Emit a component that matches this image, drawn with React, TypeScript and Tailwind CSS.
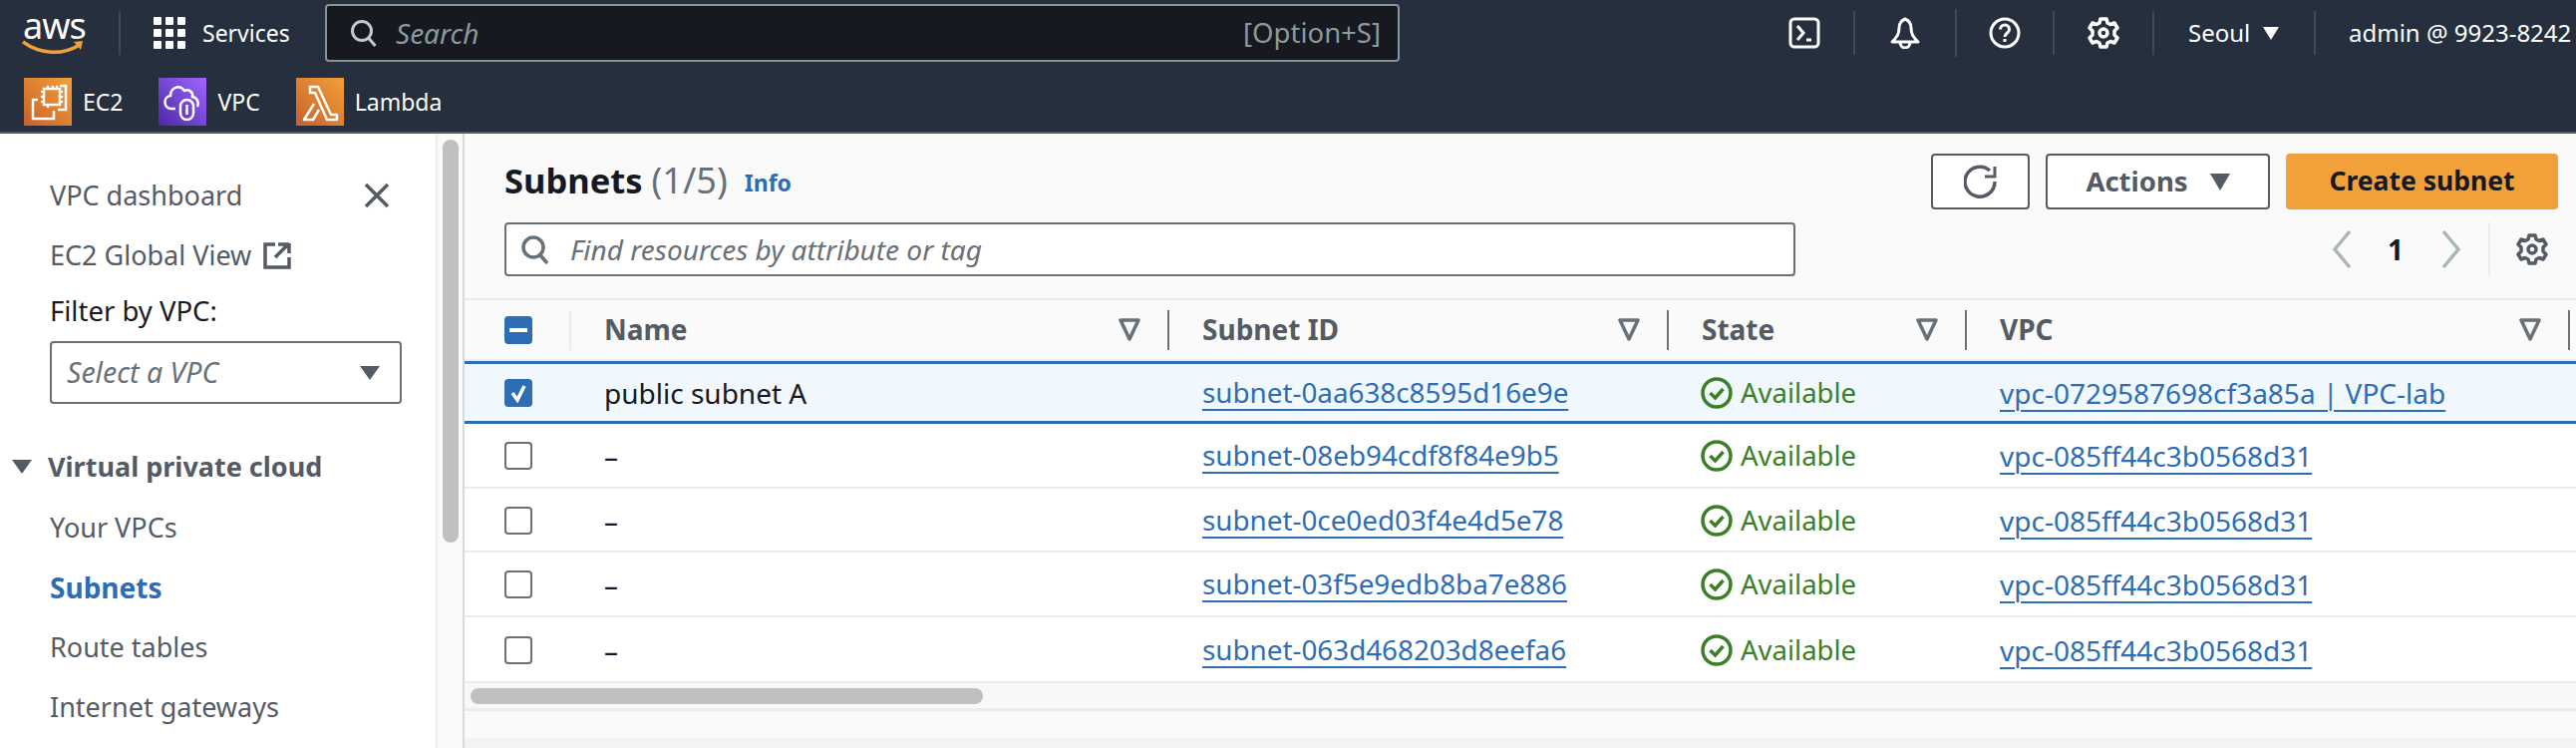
import { ReactNode } from 'react';

const rows = [
  { name: 'public subnet A', subnet: 'subnet-0aa638c8595d16e9e', vpc: 'vpc-0729587698cf3a85a | VPC-lab', selected: true, height: 'h-[63px]' },
  { name: '–', subnet: 'subnet-08eb94cdf8f84e9b5', vpc: 'vpc-085ff44c3b0568d31', height: 'h-[65px]' },
  { name: '–', subnet: 'subnet-0ce0ed03f4e4d5e78', vpc: 'vpc-085ff44c3b0568d31', height: 'h-[64px]' },
  { name: '–', subnet: 'subnet-03f5e9edb8ba7e886', vpc: 'vpc-085ff44c3b0568d31', height: 'h-[65px]' },
  { name: '–', subnet: 'subnet-063d468203d8eefa6', vpc: 'vpc-085ff44c3b0568d31', height: 'h-[66px]' },
];

const cols = 'grid grid-cols-[107px_600px_501px_299px_605px]';

function Divider({ tall }: { tall?: boolean }) {
  return <div className={`w-[2px] bg-[#414b58] ${tall ? 'h-[48px]' : 'h-[44px]'}`} />;
}

function Gear({ className }: { className: string }) {
  return (
    <svg viewBox="0 0 32 32" className={className} fill="none" stroke="currentColor" strokeWidth="3.500" strokeLinejoin="round">
      <circle cx="16" cy="16" r="4" />
      <path d="M13 2h6l1 4 3 1.500 4-1.500 3 5-3 3v4l3 3-3 5-4-1.500-3 1.500-1 4h-6l-1-4-3-1.500-4 1.500-3-5 3-3v-4l-3-3 3-5 4 1.500 3-1.500z" />
    </svg>
  );
}

function ServiceTile({ gradient, label, children }: { gradient: string; label: string; children: ReactNode }) {
  return (
    <div className="flex items-center gap-[11px]">
      <div className={`w-[48px] h-[48px] flex items-center justify-center bg-gradient-to-tr ${gradient}`}>
        <svg viewBox="0 0 48 48" className="w-[48px] h-[48px]" fill="none" stroke="white" strokeWidth="2.500">
          {children}
        </svg>
      </div>
      <span className="text-[23px] text-white">{label}</span>
    </div>
  );
}

function TopBar() {
  return (
    <header className="h-[134px] bg-[#252f3e] border-b-2 border-[#545b64] text-white">
      <div className="h-[66px] flex items-center">
        <div className="w-[119px] pl-[22px] flex flex-col items-start">
          <span className="text-[36px] leading-[30px] font-normal tracking-[-1px] pl-[1px]">aws</span>
          <svg viewBox="0 0 62 16" className="w-[62px] h-[16px] -mt-[1px]" fill="none">
            <path d="M1 2c18 13 40 13 55 4" stroke="#f2a03a" strokeWidth="3.500" />
            <path d="M52 2l9-1-2 9z" fill="#f2a03a" />
          </svg>
        </div>
        <Divider />
        <div className="w-[205px] pl-[33px] flex items-center gap-[17px]">
          <div className="grid grid-cols-3 gap-[4px] w-[32px]">
            {Array.from({ length: 9 }).map((_, i) => (
              <div key={i} className="w-[8px] h-[8px] rounded-[1px] bg-white" />
            ))}
          </div>
          <span className="text-[23px]">Services</span>
        </div>
        <div className="w-[1078px] h-[58px] rounded-[4px] border-2 border-[#879596] bg-[#16191f] flex items-center pl-[23px] pr-[17px]">
          <svg viewBox="0 0 28 28" className="w-[28px] h-[28px] text-[#c4caca]" fill="none" stroke="currentColor" strokeWidth="3">
            <circle cx="12" cy="12" r="9.500" />
            <path d="M18.500 19l7 8" />
          </svg>
          <span className="ml-[18px] text-[28px] italic text-[#8d9a9b]">Search</span>
          <span className="ml-auto text-[27.500px] text-[#8d9a9b]">[Option+S]</span>
        </div>
        <div className="w-[455px] flex justify-end">
          <svg viewBox="0 0 32 32" className="w-[32px] h-[32px] mr-[33px]" fill="none" stroke="white" strokeWidth="3">
            <rect x="2" y="2" width="28" height="28" rx="4" />
            <path d="M9 9l6 7-6 7M18 23h5" />
          </svg>
        </div>
        <Divider />
        <div className="w-[100px] flex justify-center">
          <svg viewBox="0 0 32 32" className="w-[32px] h-[32px]" fill="none" stroke="white" strokeWidth="3" strokeLinejoin="round">
            <path d="M16 2c-5 2-6 5-6 9 0 6-2 9-7 14h26c-5-5-7-8-7-14 0-4-1-7-6-9z" />
            <path d="M11 25c0 8 10 8 10 0" />
          </svg>
        </div>
        <Divider tall />
        <div className="w-[96px] flex justify-center">
          <svg viewBox="0 0 32 32" className="w-[32px] h-[32px]" fill="none" stroke="white" strokeWidth="3">
            <circle cx="16" cy="16" r="14" />
            <path d="M11.500 12.500c0-6 9-6 9 0 0 4-4.500 3.500-4.500 7.500M16 22v3" />
          </svg>
        </div>
        <Divider />
        <div className="w-[98px] flex justify-center">
          <Gear className="w-[32px] h-[32px] text-white" />
        </div>
        <Divider />
        <div className="w-[160px] pl-[34px] flex items-center gap-[13px]">
          <span className="text-[24px]">Seoul</span>
          <span className="w-0 h-0 border-x-[8px] border-x-transparent border-t-[13px] border-t-white" />
        </div>
        <Divider />
        <span className="ml-[33px] text-[24px] whitespace-nowrap">admin @ 9923-8242</span>
      </div>
      <div className="h-[66px] pl-[24px] pt-[6px] flex items-center gap-[36px]">
        <ServiceTile gradient="from-[#c8612a] to-[#f2a03a]" label="EC2">
          <rect x="20" y="11" width="16" height="16" />
          <path d="M18 14h-0M18 19h0M18 24h0M38 14h0M38 19h0M38 24h0M24 9v0M29 9v0M33 9v0M24 29v0" strokeLinecap="round" />
          <path d="M36 8h6v24h-8M14 22H9v19h21v-8" />
        </ServiceTile>
        <ServiceTile gradient="from-[#4d27a8] to-[#a166ff]" label="VPC">
          <path d="M17 31H13c-8 0-9-12-1-13 0-8 9-12 14-5 4-2 9 1 8 6 5 1 7 6 5 10" />
          <rect x="22" y="22" width="13" height="20" rx="6.500" />
          <path d="M28.500 27v10" />
        </ServiceTile>
        <ServiceTile gradient="from-[#c8612a] to-[#f2a03a]" label="Lambda">
          <path d="M14 9h8l13 28h6v5H31L19 15h-5zM18 26L8 42h9l6-10" strokeLinejoin="round" />
        </ServiceTile>
      </div>
    </header>
  );
}

function NavItem({ children, className = 'text-[#545b64] text-[27px]' }: { children: ReactNode; className?: string }) {
  return <div className={`h-[60px] flex items-center pl-[50px] ${className}`}>{children}</div>;
}

function Sidebar() {
  return (
    <aside className="w-[439px] shrink-0 bg-white border-r-2 border-[#e9ebed] pt-[32px]">
      <div className="relative">
        <NavItem>VPC dashboard</NavItem>
        <svg viewBox="0 0 26 26" className="absolute left-[365px] top-[17px] w-[26px] h-[26px]" fill="none" stroke="#545b64" strokeWidth="3.500">
          <path d="M2 2l22 22M24 2L2 24" />
        </svg>
      </div>
      <NavItem>
        EC2 Global View
        <svg viewBox="0 0 28 28" className="ml-[12px] w-[28px] h-[28px]" fill="none" stroke="#545b64" strokeWidth="3.500">
          <path d="M12 3H2v23h24V16M26 3H15M26 2v10M25 3L12 16" />
        </svg>
      </NavItem>
      <div className="h-[52px] pl-[50px] flex items-center text-[27.500px] text-[#16191f]">Filter by VPC:</div>
      <div className="ml-[50px] mt-[4px] w-[353px] h-[63px] rounded-[4px] border-2 border-[#687078] flex items-center pl-[15px] pr-[20px]">
        <span className="text-[28.500px] italic text-[#687078]">Select a VPC</span>
        <span className="ml-auto w-0 h-0 border-x-[10px] border-x-transparent border-t-[14px] border-t-[#545b64]" />
      </div>
      <div className="mt-[32px] h-[62px] flex items-center pl-[12px] gap-[16px]">
        <span className="w-0 h-0 border-x-[10px] border-x-transparent border-t-[14px] border-t-[#545b64]" />
        <span className="text-[27px] font-bold text-[#545b64]">Virtual private cloud</span>
      </div>
      <NavItem>Your VPCs</NavItem>
      <NavItem className="text-[#2e6db4] text-[28px] font-bold">Subnets</NavItem>
      <NavItem>Route tables</NavItem>
      <NavItem>Internet gateways</NavItem>
    </aside>
  );
}

function FilterIcon() {
  return (
    <svg viewBox="0 0 22 24" className="w-[22px] h-[24px]" fill="none" stroke="#687078" strokeWidth="3.500" strokeLinejoin="round">
      <path d="M2 2h18L11 21z" />
    </svg>
  );
}

function HeaderCell({ label }: { label: string }) {
  return (
    <div className="flex items-center pl-[33px] h-full">
      <span className="text-[28px] font-bold text-[#545b64] -mt-[2px]">{label}</span>
      <div className="ml-auto mr-[27px]">
        <FilterIcon />
      </div>
      <div className="w-[2px] h-[40px] bg-[#687078]" />
    </div>
  );
}

function Checkbox({ state }: { state?: 'checked' | 'mixed' }) {
  if (!state) return <div className="w-[28px] h-[28px] rounded-[4px] border-2 border-[#687078] bg-white" />;
  return (
    <div className="w-[28px] h-[28px] rounded-[4px] bg-[#2e6db4] flex items-center justify-center">
      {state === 'checked' ? (
        <svg viewBox="0 0 28 28" className="w-[28px] h-[28px]" fill="none" stroke="white" strokeWidth="3.500">
          <path d="M8 14l5 7 7-14" />
        </svg>
      ) : (
        <div className="w-[18px] h-[4px] bg-white" />
      )}
    </div>
  );
}

function Available() {
  return (
    <div className="flex items-center gap-[8px] text-[#3b7f27]">
      <svg viewBox="0 0 32 32" className="w-[32px] h-[32px]" fill="none" stroke="currentColor" strokeWidth="3.500">
        <circle cx="16" cy="16" r="14" />
        <path d="M9.500 16l5 5 8-9" />
      </svg>
      <span className="text-[27.500px]">Available</span>
    </div>
  );
}

function Row({ row }: { row: (typeof rows)[number] }) {
  return (
    <div
      className={`${cols} items-center ${row.height} ${
        row.selected ? 'bg-[#f1f8fd] border-y-[3px] border-[#2e6db4]' : 'pt-[1px] bg-white border-b-2 border-[#eaeded]'
      }`}
    >
      <div className="pl-[40px]">
        <Checkbox state={row.selected ? 'checked' : undefined} />
      </div>
      <div className="pl-[33px] text-[28px] text-[#16191f]">{row.name}</div>
      <div className="pl-[33px] text-[27.800px] text-[#2e6db4] underline decoration-2 underline-offset-[6px]">{row.subnet}</div>
      <div className="pl-[32px]">
        <Available />
      </div>
      <div className="pl-[33px] text-[28px] text-[#2e6db4] underline decoration-2 underline-offset-[6px]">{row.vpc}</div>
    </div>
  );
}

function Main() {
  return (
    <main className="flex-1 min-w-0 overflow-hidden bg-[#fafafa]">
      <div className="h-[167px] border-b-2 border-[#eaeded] pl-[40px] pr-[18px] pt-[20px]">
        <div className="flex items-center h-[56px]">
          <h1 className="text-[34.500px] font-bold text-[#16191f] -mt-[3px]">Subnets</h1>
          <span className="ml-[9px] text-[36px] text-[#687078] -mt-[3px]">(1/5)</span>
          <span className="ml-[17px] mt-[3px] text-[23px] font-bold text-[#2e6db4]">Info</span>
          <button className="ml-auto w-[99px] h-[56px] rounded-[4px] border-2 border-[#545b64] bg-white flex items-center justify-center">
            <svg viewBox="0 0 34 34" className="w-[34px] h-[34px]" fill="none" stroke="#545b64" strokeWidth="3.500">
              <path d="M26 6A15 15 0 1 0 31 17" />
              <path d="M31 2v10H21" strokeWidth="3" />
            </svg>
          </button>
          <button className="ml-[16px] w-[225px] h-[56px] rounded-[4px] border-2 border-[#545b64] bg-white flex items-center justify-center gap-[22px]">
            <span className="text-[27.500px] font-bold text-[#545b64]">Actions</span>
            <span className="w-0 h-0 border-x-[10px] border-x-transparent border-t-[17px] border-t-[#545b64]" />
          </button>
          <button className="ml-[16px] w-[273px] h-[56px] rounded-[4px] bg-[#f2a03a] text-[26.500px] font-bold text-[#16191f]">
            Create subnet
          </button>
        </div>
        <div className="flex items-center mt-[13px]">
          <div className="w-[1295px] h-[54px] rounded-[4px] border-2 border-[#687078] bg-white flex items-center pl-[14px]">
            <svg viewBox="0 0 30 30" className="w-[30px] h-[30px]" fill="none" stroke="#687078" strokeWidth="3.500">
              <circle cx="13" cy="13" r="10" />
              <path d="M20 21l7 8" />
            </svg>
            <span className="ml-[20px] text-[28px] italic text-[#687078]">Find resources by attribute or tag</span>
          </div>
          <div className="ml-auto flex items-center h-[54px]">
            <svg viewBox="0 0 20 40" className="w-[20px] h-[40px]" fill="none" stroke="#aab7b8" strokeWidth="3.500">
              <path d="M18 2L3 20l15 18" />
            </svg>
            <span className="ml-[36px] text-[28px] font-bold text-[#16191f]">1</span>
            <svg viewBox="0 0 20 40" className="ml-[38px] w-[20px] h-[40px]" fill="none" stroke="#aab7b8" strokeWidth="3.500">
              <path d="M2 2l15 18L2 38" />
            </svg>
            <div className="ml-[27px] w-[2px] h-[54px] bg-[#eaeded]" />
            <div className="ml-[26px] mr-[10px]">
              <Gear className="w-[32px] h-[32px] text-[#545b64]" />
            </div>
          </div>
        </div>
      </div>
      <div className={`${cols} h-[61px] items-center border-b-2 border-[#eaeded]`}>
        <div className="flex items-center pl-[40px] h-full">
          <Checkbox state="mixed" />
          <div className="ml-auto w-[2px] h-[40px] bg-[#eaeded]" />
        </div>
        <HeaderCell label="Name" />
        <HeaderCell label="Subnet ID" />
        <HeaderCell label="State" />
        <HeaderCell label="VPC" />
      </div>
      {rows.map(row => (
        <Row key={row.subnet} row={row} />
      ))}
      <div className="h-[28px] bg-[#f8f8f8] border-b-[3px] border-[#eaeded] pt-[5px] pl-[6px]">
        <div className="w-[514px] h-[16px] rounded-[8px] bg-[#c0c0c0]" />
      </div>
      <div className="h-[27px] bg-[#fafafa]" />
      <div className="h-[10px] bg-[#f2f3f3]" />
    </main>
  );
}

export default function App() {
  return (
    <div className="w-[2584px] h-[750px] overflow-hidden bg-white font-['Noto_Sans','Open_Sans',sans-serif]">
      <TopBar />
      <div className="flex h-[616px]">
        <Sidebar />
        <div className="w-[27px] shrink-0 bg-[#fafafa] border-r-2 border-[#d5dbdb] pt-[6px] pl-[5px]">
          <div className="w-[16px] h-[404px] rounded-[8px] bg-[#c0c0c0]" />
        </div>
        <Main />
      </div>
    </div>
  );
}
